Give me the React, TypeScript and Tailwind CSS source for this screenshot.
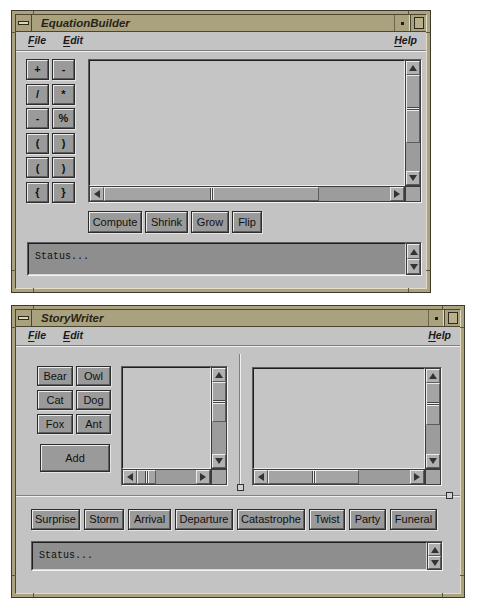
import React from "react";

const SANS = "font-['Liberation_Sans',Arial,sans-serif]";
const MONO = "font-['Liberation_Mono','DejaVu_Sans_Mono',monospace]";

const RAISED =
  "border border-t-[#ececec] border-l-[#ececec] border-r-[#5c5c5c] border-b-[#5c5c5c]";
const SUNKEN =
  "border border-t-[#5c5c5c] border-l-[#5c5c5c] border-r-[#f4f4f4] border-b-[#f4f4f4]";

function Tri({ dir }: { dir: "up" | "down" | "left" | "right" }) {
  if (dir === "up")
    return <div className="w-0 h-0 border-l-[4px] border-r-[4px] border-b-[6px] border-l-transparent border-r-transparent border-b-[#333]" />;
  if (dir === "down")
    return <div className="w-0 h-0 border-l-[4px] border-r-[4px] border-t-[6px] border-l-transparent border-r-transparent border-t-[#333]" />;
  if (dir === "left")
    return <div className="w-0 h-0 border-t-[4px] border-b-[4px] border-r-[6px] border-t-transparent border-b-transparent border-r-[#333]" />;
  return <div className="w-0 h-0 border-t-[4px] border-b-[4px] border-l-[6px] border-t-transparent border-b-transparent border-l-[#333]" />;
}

function ArrowBtn({ dir, className = "w-[14px] h-[14px]" }: { dir: "up" | "down" | "left" | "right"; className?: string }) {
  return (
    <div className={`flex items-center justify-center bg-[#b0b0b0] shrink-0 ${RAISED} ${className}`}>
      <Tri dir={dir} />
    </div>
  );
}

function VScroll({ thumb }: { thumb: string }) {
  return (
    <div className="flex flex-col w-[16px] bg-[#9c9c9c] border border-[#3c3c3c]">
      <ArrowBtn dir="up" />
      <div className={`flex flex-col justify-center items-stretch bg-[#a4a4a4] ${RAISED} ${thumb}`}>
        <div className="h-px bg-[#444]" />
        <div className="h-px bg-[#eee]" />
        <div className="h-px bg-[#444]" />
        <div className="h-px bg-[#eee]" />
      </div>
      <div className="flex-1" />
      <ArrowBtn dir="down" />
    </div>
  );
}

function HScroll({ thumb }: { thumb: string }) {
  return (
    <div className="flex flex-1 h-[16px] bg-[#9c9c9c] border border-[#3c3c3c]">
      <ArrowBtn dir="left" />
      <div className={`flex justify-center items-stretch bg-[#a4a4a4] ${RAISED} ${thumb}`}>
        <div className="w-px bg-[#444]" />
        <div className="w-px bg-[#eee]" />
        <div className="w-px bg-[#444]" />
        <div className="w-px bg-[#eee]" />
      </div>
      <div className="flex-1" />
      <ArrowBtn dir="right" />
    </div>
  );
}

function ScrollBox({ className, vThumb, hThumb }: { className: string; vThumb: string; hThumb: string }) {
  return (
    <div className={`flex flex-col shrink-0 ${SUNKEN} ${className}`}>
      <div className="flex flex-1 min-h-0">
        <div className="flex-1 bg-[#c5c5c5] border border-t-[#1e1e1e] border-l-[#1e1e1e] border-r-[#ececec] border-b-[#ececec]" />
        <VScroll thumb={vThumb} />
      </div>
      <div className="flex h-[16px]">
        <HScroll thumb={hThumb} />
        <div className="w-[16px] bg-[#a4a4a4] border border-[#3c3c3c]" />
      </div>
    </div>
  );
}

function PushButton({ label, className, text = "text-[11px]" }: { label: string; className: string; text?: string }) {
  return (
    <div className={`shrink-0 border border-[#2c2c2c] shadow-[1px_1px_0_#e4e4e4] ${className}`}>
      <div className={`w-full h-full flex items-center justify-center bg-[#9a9a9a] text-[#111] ${SANS} ${text} ${RAISED}`}>
        {label}
      </div>
    </div>
  );
}

function StatusBox({ className }: { className: string }) {
  return (
    <div className={`flex shrink-0 ${SUNKEN} ${className}`}>
      <div className={`flex-1 bg-[#8e8e8e] border border-t-[#1e1e1e] border-l-[#1e1e1e] border-r-[#d8d8d8] border-b-[#d8d8d8] pl-[6px] pt-[5px] text-[10px] text-[#111] ${MONO}`}>
        Status...
      </div>
      <div className="flex flex-col w-[15px] bg-[#a4a4a4] border border-[#3c3c3c]">
        <ArrowBtn dir="up" className="w-[13px] flex-1" />
        <ArrowBtn dir="down" className="w-[13px] flex-1" />
      </div>
    </div>
  );
}

function Mnemonic({ first, rest }: { first: string; rest: string }) {
  return (
    <span>
      <span className="underline underline-offset-2">{first}</span>
      {rest}
    </span>
  );
}

function Window({ title, className, children }: { title: string; className: string; children: React.ReactNode }) {
  return (
    <div className={`relative flex flex-col border border-[#3d3a2a] bg-[#aba37f] p-[3px] ${className}`}>
      {/* frame resize-corner ticks */}
      <div className="absolute left-[21px] top-0 w-px h-[4px] bg-[#5a5640]" />
      <div className="absolute right-[21px] top-0 w-px h-[4px] bg-[#5a5640]" />
      <div className="absolute left-[21px] bottom-0 w-px h-[4px] bg-[#5a5640]" />
      <div className="absolute right-[21px] bottom-0 w-px h-[4px] bg-[#5a5640]" />
      <div className="absolute left-0 top-[21px] w-[4px] h-px bg-[#5a5640]" />
      <div className="absolute right-0 top-[21px] w-[4px] h-px bg-[#5a5640]" />
      <div className="absolute left-0 bottom-[21px] w-[4px] h-px bg-[#5a5640]" />
      <div className="absolute right-0 bottom-[21px] w-[4px] h-px bg-[#5a5640]" />
      <div className="flex flex-col flex-1 min-h-0 border border-t-[#4a4632] border-l-[#4a4632] border-r-[#e2ddc6] border-b-[#e2ddc6] bg-[#c3c3c3]">
        {/* title bar */}
        <div className="flex h-[17px] bg-[#aaa27e] border-b border-[#4a4632]">
          <div className="w-[16px] flex items-center justify-center border-r border-[#4a4632]">
            <div className="w-[11px] h-[4px] bg-[#ddd6b8] border border-[#2b281c]" />
          </div>
          <div className={`flex-1 pl-[9px] leading-[16px] italic font-bold text-[11.5px] text-[#26241a] ${SANS}`}>{title}</div>
          <div className="w-[16px] flex items-center justify-center border-l border-[#6b664c] border-r border-r-[#e0dac0]">
            <div className="w-[3px] h-[3px] bg-[#1e1c14]" />
          </div>
          <div className="w-[16px] flex items-center justify-center border-l border-[#4a4632]">
            <div className="w-[10px] h-[12px] border border-[#2b281c] bg-[#b8b08c]" />
          </div>
        </div>
        {/* menu bar */}
        <div className={`flex items-center h-[18px] pl-[12px] pr-[9px] italic font-bold text-[10.5px] text-[#1a1a1a] ${SANS}`}>
          <Mnemonic first="F" rest="ile" />
          <span className="ml-[17px]">
            <Mnemonic first="E" rest="dit" />
          </span>
          <span className="ml-auto">
            <Mnemonic first="H" rest="elp" />
          </span>
        </div>
        <div className="h-[2px] border-t border-[#7e7e7e] border-b border-b-[#f0f0f0]" />
        {children}
      </div>
    </div>
  );
}

const CALC = ["+", "-", "/", "*", "-", "%", "(", ")", "(", ")", "{", "}"];
const ANIMALS = ["Bear", "Owl", "Cat", "Dog", "Fox", "Ant"];
const STORY: [string, string][] = [
  ["Surprise", "w-[49px]"],
  ["Storm", "w-[40px]"],
  ["Arrival", "w-[43px]"],
  ["Departure", "w-[58px]"],
  ["Catastrophe", "w-[68px]"],
  ["Twist", "w-[36px]"],
  ["Party", "w-[37px]"],
  ["Funeral", "w-[47px]"],
];

export default function App() {
  return (
    <div className="w-[477px] h-[609px] bg-white flex flex-col gap-[12px] pt-[10px] pl-[11px]">
      <Window title="EquationBuilder" className="w-[420px] h-[283px]">
        <div className="flex flex-col flex-1 pt-[7px] pl-[10px]">
          <div className="flex h-[144px]">
            <div className="grid grid-cols-[23px_23px] auto-rows-[21px] gap-x-[3px] gap-y-[3.6px]">
              {CALC.map((c, i) => (
                <PushButton key={i} label={c} className="w-[23px] h-[21px]" text="text-[11px] font-bold" />
              ))}
            </div>
            <ScrollBox className="ml-[13px] w-[334px] h-[144px]" vThumb="h-[68px]" hThumb="w-[215px]" />
          </div>
          <div className="flex gap-[3px] mt-[8px] ml-[62px] h-[22px]">
            <PushButton label="Compute" className="w-[54px] h-[22px]" />
            <PushButton label="Shrink" className="w-[43px] h-[22px]" />
            <PushButton label="Grow" className="w-[38px] h-[22px]" />
            <PushButton label="Flip" className="w-[30px] h-[22px]" />
          </div>
          <StatusBox className="mt-[9px] ml-px w-[395px] h-[34px]" />
        </div>
      </Window>

      <Window title="StoryWriter" className="w-[454px] h-[293px]">
        <div className="relative flex h-[148px]">
          <div className="flex w-[223px] pt-[19px] pl-[21px]">
            <div className="flex flex-col">
              <div className="grid grid-cols-[36px_35px] auto-rows-[20px] gap-x-[3px] gap-y-[4px]">
                {ANIMALS.map((a) => (
                  <PushButton key={a} label={a} className="w-full h-[20px]" />
                ))}
              </div>
              <PushButton label="Add" className="mt-[10px] ml-[3px] w-[70px] h-[28px]" />
            </div>
            <ScrollBox className="ml-[10px] w-[107px] h-[120px]" vThumb="h-[40px]" hThumb="w-[19px]" />
          </div>
          <div className="mt-[7px] h-[132px] w-[2px] border-l border-[#808080] border-r border-r-[#f0f0f0]" />
          <div className="flex pt-[20px] pl-[11px]">
            <ScrollBox className="w-[190px] h-[119px]" vThumb="h-[42px]" hThumb="w-[91px]" />
          </div>
          {/* sashes */}
          <div className="absolute left-[221px] top-[137px] w-[7px] h-[7px] bg-[#d0d0d0] border border-[#333]" />
          <div className="absolute right-[7px] bottom-[-4px] w-[7px] h-[7px] bg-[#d0d0d0] border border-[#333] z-10" />
        </div>
        <div className="h-[2px] border-t border-[#808080] border-b border-b-[#f0f0f0]" />
        <div className="flex flex-col pt-[12px] pl-[15px]">
          <div className="flex gap-[4px] h-[21px]">
            {STORY.map(([s, w]) => (
              <PushButton key={s} label={s} className={`${w} h-[21px]`} />
            ))}
          </div>
          <StatusBox className="mt-[11px] w-[412px] h-[30px]" />
        </div>
      </Window>
    </div>
  );
}
